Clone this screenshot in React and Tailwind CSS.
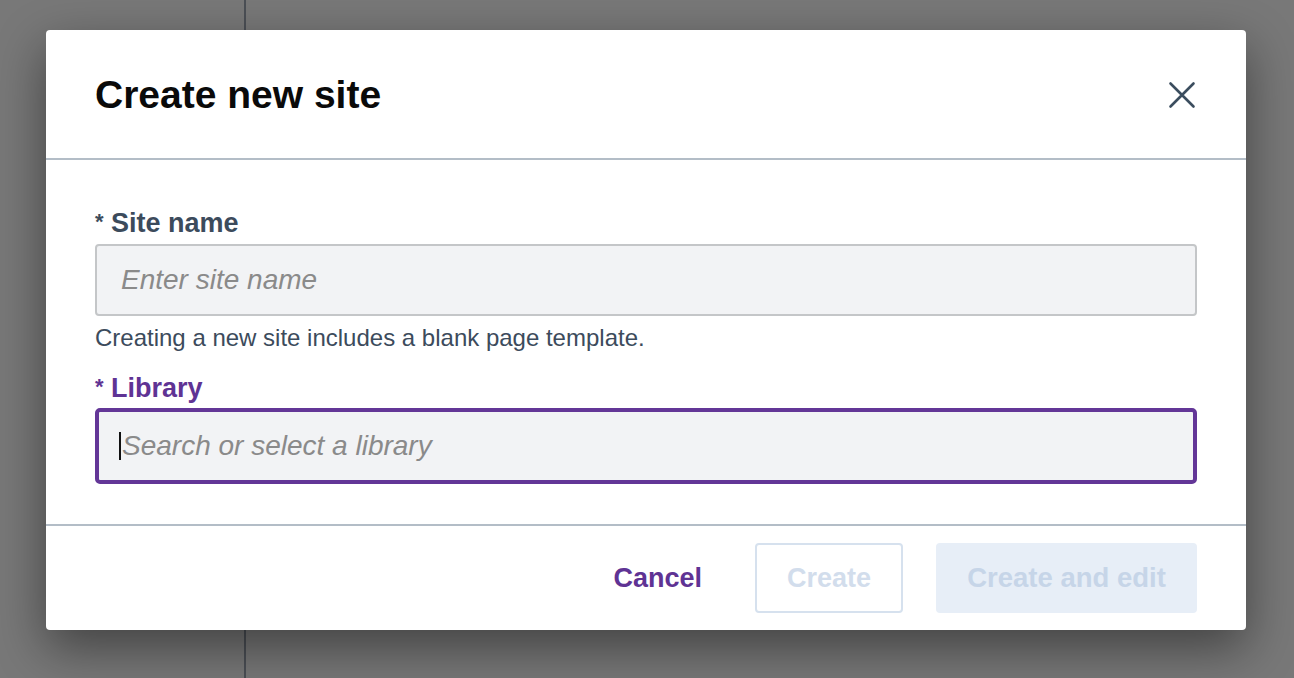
export default function App() {
  const font = { fontFamily: '"Liberation Sans", Arial, Helvetica, sans-serif' };
  return (
    <div className="relative h-[678px] w-full overflow-hidden bg-[#787878]" style={font}>
      <div className="flex h-full">
        <div className="w-[244px] shrink-0" />
        <div className="w-[2px] bg-[#4b4f55]" />
        <div className="flex-1" />
      </div>

      <div className="absolute left-[46px] top-[30px] flex h-[600px] w-[1200px] flex-col rounded-[4px] bg-white shadow-[0_18px_50px_rgba(0,0,0,0.45)]">
        {/* header */}
        <div className="flex h-[130px] shrink-0 items-center justify-between border-b-2 border-[#b3bdc7] px-[49px] pt-[2px]">
          <h1 className="text-[39px] font-bold leading-[44px] text-[#0a0a0a]">Create new site</h1>
          <svg width="28" height="28" viewBox="0 0 28 28" className="mr-[1px]">
            <path d="M2.5 2.5 L25.5 25.5 M25.5 2.5 L2.5 25.5" stroke="#3b4d5e" strokeWidth="2.6" strokeLinecap="round" fill="none" />
          </svg>
        </div>

        {/* body */}
        <div className="flex shrink-0 flex-col px-[49px] pb-[40px] pt-[48px]">
          <label className="mb-[6px] block h-[30px] text-[27px] font-bold leading-[30px] text-[#3c4b5c]">
            <span className="relative -top-[3px] text-[22px]">*</span> Site name
          </label>
          <div className="flex h-[72px] items-center rounded-[4px] border-2 border-[#c4c6c8] bg-[#f2f3f5] pl-[24px]">
            <span className="text-[28px] italic leading-[30px] text-[#8a8a8a]">Enter site name</span>
          </div>
          <p className="mt-[7px] h-[30px] text-[24px] leading-[30px] text-[#3c4b5c]">
            Creating a new site includes a blank page template.
          </p>
          <label className="mb-[5px] mt-[20px] block h-[30px] text-[27px] font-bold leading-[30px] text-[#5f3394]">
            <span className="relative -top-[3px] text-[22px]">*</span> Library
          </label>
          <div className="flex h-[76px] items-center rounded-[5px] border-4 border-[#633697] bg-[#f2f3f5] pl-[20px]">
            <span className="mr-[1px] h-[28px] w-[2px] bg-[#111]" />
            <span className="text-[28px] italic leading-[30px] text-[#8a8a8a]">Search or select a library</span>
          </div>
        </div>

        {/* footer */}
        <div className="flex flex-1 items-center justify-end border-t-2 border-[#b3bdc7] px-[49px]">
          <button className="text-[27px] font-bold text-[#5f3394]">Cancel</button>
          <button className="ml-[53px] flex h-[70px] w-[148px] items-center justify-center rounded-[4px] border-2 border-[#d6e1ee] bg-white text-[27px] font-bold text-[#d2ddec]">
            Create
          </button>
          <button className="ml-[33px] flex h-[70px] w-[261px] items-center justify-center rounded-[4px] bg-[#e7eef7] text-[27.5px] font-bold text-[#c6d5e8]">
            Create and edit
          </button>
        </div>
      </div>
    </div>
  );
}
